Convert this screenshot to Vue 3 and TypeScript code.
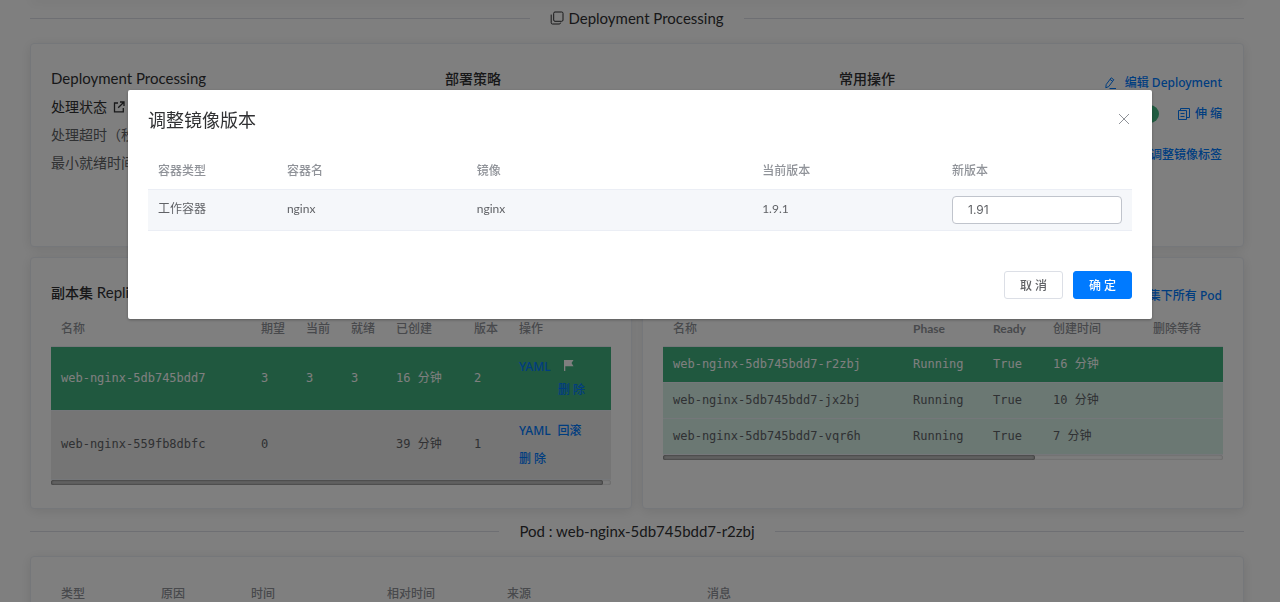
<script setup lang="ts">
import { ref } from 'vue'

interface ReplicaSet {
  name: string
  desired: string
  current: string
  ready: string
  age: string
  revision: string
  active: boolean
}
interface Pod {
  name: string
  phase: string
  ready: string
  age: string
  active: boolean
}

const replicaSets: ReplicaSet[] = [
  { name: 'web-nginx-5db745bdd7', desired: '3', current: '3', ready: '3', age: '16 分钟', revision: '2', active: true },
  { name: 'web-nginx-559fb8dbfc', desired: '0', current: '', ready: '', age: '39 分钟', revision: '1', active: false },
]
const pods: Pod[] = [
  { name: 'web-nginx-5db745bdd7-r2zbj', phase: 'Running', ready: 'True', age: '16 分钟', active: true },
  { name: 'web-nginx-5db745bdd7-jx2bj', phase: 'Running', ready: 'True', age: '10 分钟', active: false },
  { name: 'web-nginx-5db745bdd7-vqr6h', phase: 'Running', ready: 'True', age: '7 分钟', active: false },
]
const version = ref('1.91')
</script>

<template>
  <div class="page">
    <div class="section-edge"></div>
    <div class="divider">
      <span class="divider-text">
        <svg class="icon" width="14" height="14" viewBox="0 0 14 14" fill="none" stroke="currentColor">
          <rect x="3.7" y="1" width="9.3" height="9.3" rx="1.3" />
          <path d="M1.2 3.6v8.2a1.2 1.2 0 0 0 1.2 1.2h6.8a1.6 1.6 0 0 0 1.5-1.4" />
        </svg>
        Deployment Processing
      </span>
    </div>

    <section class="card overview">
      <div>
        <h3>Deployment Processing</h3>
        <p class="status">
          处理状态
          <svg width="12" height="12" viewBox="0 0 12 12" fill="none" stroke="currentColor" stroke-width="1.3">
            <path d="M5 2H1.5v8.8h8.8V7M7 1h4v4M11 1 5.2 6.8" />
          </svg>
        </p>
        <p>处理超时（秒）</p>
        <p>最小就绪时间</p>
      </div>
      <div>
        <h3 class="strong">部署策略</h3>
      </div>
      <div class="operations">
        <h3 class="strong">常用操作</h3>
        <div class="actions">
          <button type="button" class="link">
            <svg width="14" height="14" viewBox="0 0 14 14" fill="none" stroke="currentColor">
              <path d="M2.2 8.5 7.2 1.8l2.6 1.9-5 6.8-3 1.3zM6 3.4l2.6 1.9M5.5 12.5H12" />
            </svg>
            编辑 Deployment
          </button>
          <div class="scale">
            <span class="pill"></span>
            <button type="button" class="link narrow">
              <svg width="14" height="14" viewBox="0 0 14 14" fill="none" stroke="currentColor">
                <path d="M1.5 3.5h8v9h-8zM3.5 3.5v-2h9v9h-3M3.5 6.5h4M3.5 9.5h4" />
              </svg>
              伸 缩
            </button>
          </div>
          <button type="button" class="link tags">调整镜像标签</button>
        </div>
      </div>
    </section>

    <div class="panels">
      <section class="card panel">
        <div class="panel-head">
          <h3><span class="strong">副本集</span> ReplicaSet</h3>
        </div>
        <table class="mono replica">
          <colgroup>
            <col class="w-name" /><col class="w-num" /><col class="w-num" /><col class="w-num" />
            <col class="w-age" /><col class="w-num" /><col />
          </colgroup>
          <thead>
            <tr><th>名称</th><th>期望</th><th>当前</th><th>就绪</th><th>已创建</th><th>版本</th><th>操作</th></tr>
          </thead>
          <tbody>
            <tr v-for="r in replicaSets" :key="r.name" :class="{ active: r.active }">
              <td>{{ r.name }}</td>
              <td>{{ r.desired }}</td>
              <td>{{ r.current }}</td>
              <td>{{ r.ready }}</td>
              <td>{{ r.age }}</td>
              <td>{{ r.revision }}</td>
              <td>
                <div class="ops">
                  <button type="button" class="link">YAML</button>
                  <svg v-if="r.active" class="flag" width="12" height="12" viewBox="0 0 12 12" fill="currentColor">
                    <path d="M1 1h9.5L8.5 4l2 3.2H2.3V12H1z" />
                  </svg>
                  <button v-else type="button" class="link">回滚</button>
                  <button type="button" class="link remove">删 除</button>
                </div>
              </td>
            </tr>
          </tbody>
        </table>
        <div class="track"><div class="thumb most"></div></div>
      </section>

      <section class="card panel">
        <div class="panel-head right">
          <button type="button" class="link">副本集下所有 Pod</button>
        </div>
        <table class="mono pods">
          <colgroup>
            <col class="w-pod" /><col class="w-phase" /><col class="w-ready" /><col class="w-time" /><col />
          </colgroup>
          <thead>
            <tr><th>名称</th><th class="latin">Phase</th><th class="latin">Ready</th><th>创建时间</th><th>删除等待</th></tr>
          </thead>
          <tbody>
            <tr v-for="p in pods" :key="p.name" :class="{ active: p.active }">
              <td>{{ p.name }}</td>
              <td>{{ p.phase }}</td>
              <td>{{ p.ready }}</td>
              <td>{{ p.age }}</td>
              <td></td>
            </tr>
          </tbody>
        </table>
        <div class="track"><div class="thumb part"></div></div>
      </section>
    </div>

    <div class="divider second">
      <span class="divider-text">Pod : web-nginx-5db745bdd7-r2zbj</span>
    </div>

    <section class="card events">
      <table>
        <colgroup>
          <col class="e-type" /><col class="e-reason" /><col class="e-time" /><col class="e-rel" /><col class="e-src" /><col />
        </colgroup>
        <thead>
          <tr><th>类型</th><th>原因</th><th>时间</th><th>相对时间</th><th>来源</th><th>消息</th></tr>
        </thead>
      </table>
    </section>
  </div>

  <div class="mask">
    <div class="dialog" role="dialog" aria-modal="true" aria-labelledby="dialog-title">
      <header class="dialog-head">
        <h2 id="dialog-title">调整镜像版本</h2>
        <button type="button" class="close" aria-label="关闭">
          <svg width="12" height="12" viewBox="0 0 12 12" fill="none" stroke="currentColor">
            <path d="M1 1l10 10M11 1 1 11" />
          </svg>
        </button>
      </header>
      <table class="images">
        <colgroup>
          <col class="i-kind" /><col class="i-mid" /><col class="i-image" /><col class="i-mid" /><col class="i-mid" />
        </colgroup>
        <thead>
          <tr><th>容器类型</th><th>容器名</th><th>镜像</th><th>当前版本</th><th id="new-version">新版本</th></tr>
        </thead>
        <tbody>
          <tr>
            <td>工作容器</td>
            <td>nginx</td>
            <td>nginx</td>
            <td>1.9.1</td>
            <td><input v-model="version" type="text" aria-labelledby="new-version" /></td>
          </tr>
        </tbody>
      </table>
      <footer class="dialog-foot">
        <button type="button" class="btn">取 消</button>
        <button type="button" class="btn primary">确 定</button>
      </footer>
    </div>
  </div>
</template>

<style>
body {
  margin: 0;
  overflow: hidden;
}
</style>

<style scoped>
.page,
.mask {
  font-family: Lato, "Noto Sans CJK SC", sans-serif;
  font-size: 14px;
  color: #606266;
  box-sizing: border-box;
}
.page {
  height: 100vh;
  overflow: hidden;
  padding: 0 36px 0 30px;
  background: #fff;
}
.section-edge {
  height: 4px;
  margin-top: -4px;
  margin-bottom: 7px;
  box-shadow: 0 2px 12px rgba(0, 0, 0, 0.1);
}
h2,
h3,
p {
  margin: 0;
  font-weight: 400;
}
button {
  font-family: inherit;
  border: 0;
  background: none;
  padding: 0;
  cursor: pointer;
}
.strong {
  font-weight: 500;
}
.divider {
  display: flex;
  align-items: center;
  gap: 20px;
  height: 22px;
  color: #303133;
}
.divider::before,
.divider::after {
  content: "";
  flex: 1;
  height: 1px;
  background: #dcdfe6;
}
.divider-text {
  display: flex;
  align-items: center;
  gap: 4px;
  font-size: 15px;
  line-height: 20px;
}
.card {
  box-sizing: border-box;
  border: 1px solid #ebeef5;
  border-radius: 4px;
  background: #fff;
  padding: 20px;
  box-shadow: 0 2px 12px rgba(0, 0, 0, 0.1);
}
.overview {
  display: grid;
  grid-template-columns: repeat(3, 1fr);
  gap: 10px;
  margin-top: 14px;
  min-height: 204px;
}
h3 {
  font-size: 15px;
  line-height: 28px;
  color: #303133;
}
h3.strong,
h3 .strong {
  font-size: 14px;
}
.overview h3 {
  line-height: 29px;
}
.overview p {
  line-height: 28px;
}
.overview .status {
  display: flex;
  align-items: center;
  gap: 6px;
  color: #303133;
}
.operations {
  display: flex;
  justify-content: space-between;
}
.link {
  display: inline-flex;
  align-items: center;
  gap: 7px;
  font-family: "Noto Sans", "Noto Sans CJK SC", sans-serif;
  font-size: 12px;
  font-weight: 500;
  line-height: 28px;
  color: #007aff;
}
.link.narrow {
  gap: 4px;
}
.actions {
  display: flex;
  flex-direction: column;
  align-items: flex-end;
  padding: 5px 1px 0 0;
}
.scale {
  display: flex;
  align-items: center;
  gap: 18px;
  margin: 3px 0 13px;
}
.pill {
  width: 36px;
  height: 18px;
  border-radius: 9px;
  background: #42b983;
}
.panels {
  display: grid;
  grid-template-columns: 1fr 1fr;
  gap: 10px;
  margin-top: 10px;
}
.panel {
  min-height: 252px;
}
.panel-head {
  height: 38px;
}
.panel-head h3 {
  line-height: 29px;
}
.panel-head.right {
  display: flex;
  justify-content: flex-end;
  align-items: flex-start;
  padding: 4px 1px 0 0;
  box-sizing: border-box;
}
table {
  width: 100%;
  table-layout: fixed;
  border-collapse: collapse;
  font-size: 12px;
}
th,
td {
  box-sizing: border-box;
  padding: 0 10px;
  text-align: left;
  line-height: 23px;
  white-space: nowrap;
}
th {
  font-weight: 500;
  color: #909399;
  border-bottom: 1px solid #ebeef5;
}
th.latin {
  font-weight: 700;
}
.mono th {
  height: 30px;
  padding-bottom: 4px;
  line-height: 22px;
}
.mono td {
  font-family: "DejaVu Sans Mono", "Noto Sans CJK SC", monospace;
  border-bottom: 1px solid #ebeef5;
}
.mono .active td {
  background: #40b07e;
  color: #fff;
}
.replica td {
  height: 69px;
  background: #eaeaea;
}
.replica .active td {
  height: 64px;
}
.pods td {
  height: 36px;
  background: #d6f0e6;
}
.w-name { width: 200px; }
.w-num { width: 45px; }
.w-age { width: 78px; }
.w-pod { width: 240px; }
.w-phase { width: 80px; }
.w-ready { width: 60px; }
.w-time { width: 100px; }
.ops {
  display: flex;
  flex-wrap: wrap;
  align-items: center;
  column-gap: 7px;
}
.ops .flag {
  margin: 0 24px 4px 5px;
}
.active .ops .link {
  line-height: 23px;
}
.active .ops .remove {
  margin-left: 39px;
}
.track {
  height: 5px;
  border-radius: 3px;
  background: #fafafa;
  box-shadow: inset 0 0 2px rgba(0, 0, 0, 0.3);
}
.thumb {
  height: 5px;
  border-radius: 3px;
  background: #c0c0c0;
  box-shadow: inset 0 0 2px rgba(0, 0, 0, 0.7);
}
.thumb.most {
  width: 98.5%;
}
.thumb.part {
  width: 66.5%;
}
.second {
  margin-top: 11px;
}
.events {
  margin-top: 14px;
}
.events th {
  padding: 5px 10px 8px;
}
.e-type { width: 100px; }
.e-reason { width: 90px; }
.e-time { width: 136px; }
.e-rel { width: 120px; }
.e-src { width: 200px; }
.mask {
  position: fixed;
  inset: 0;
  background: rgba(0, 0, 0, 0.5);
}
.dialog {
  box-sizing: border-box;
  width: 80%;
  margin: 15vh auto 0;
  padding: 20px;
  border-radius: 2px;
  background: #fff;
  box-shadow: 0 1px 3px rgba(0, 0, 0, 0.3);
}
.dialog-head {
  display: flex;
  align-items: flex-start;
  justify-content: space-between;
  height: 20px;
}
h2 {
  font-size: 18px;
  line-height: 20px;
  color: #303133;
}
.close {
  display: flex;
  padding: 3px 2px;
  color: #909399;
}
.images {
  margin-top: 20px;
}
.images th {
  height: 39px;
  padding-top: 2px;
}
.images td {
  height: 41px;
  padding-bottom: 2px;
  background: #f5f7fa;
  border-bottom: 1px solid #ebeef5;
  vertical-align: middle;
}
.images td:last-child {
  padding-bottom: 0;
}
.i-kind { width: 13.1%; }
.i-mid { width: 19.3%; }
.i-image { width: 29%; }
input {
  display: block;
  box-sizing: border-box;
  width: 100%;
  height: 28px;
  padding: 0 15px;
  border: 1px solid #c0c4cc;
  border-radius: 4px;
  background: #fff;
  font-family: Inter, sans-serif;
  font-size: 12px;
  color: #606266;
}
.dialog-foot {
  display: flex;
  justify-content: flex-end;
  gap: 10px;
  margin-top: 40px;
}
.btn {
  box-sizing: border-box;
  height: 28px;
  padding: 0 15px;
  border: 1px solid #dcdfe6;
  border-radius: 3px;
  background: #fff;
  font-size: 12px;
  font-weight: 500;
  color: #606266;
}
.btn.primary {
  border-color: #007aff;
  background: #007aff;
  color: #fff;
}
</style>
